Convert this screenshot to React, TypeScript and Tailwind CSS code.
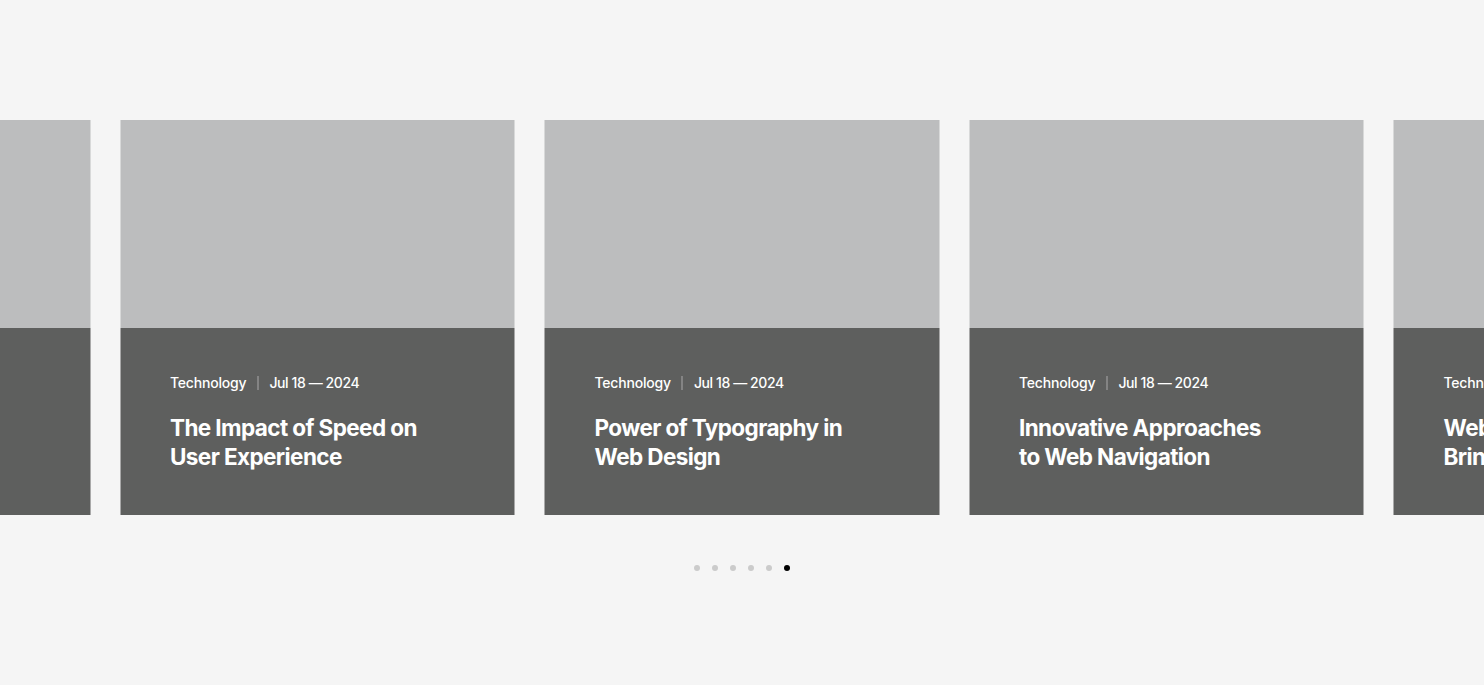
import React from 'react';

interface Post {
  id: number;
  category: string;
  date: string;
  title: string;
}

const posts: Post[] = [
  { id: 1, category: 'Technology', date: 'Jul 18 — 2024', title: 'Designing for Clarity and Focus' },
  { id: 2, category: 'Technology', date: 'Jul 18 — 2024', title: 'The Impact of Speed on User Experience' },
  { id: 3, category: 'Technology', date: 'Jul 18 — 2024', title: 'Power of Typography in Web Design' },
  { id: 4, category: 'Technology', date: 'Jul 18 — 2024', title: 'Innovative Approaches to Web Navigation' },
  { id: 5, category: 'Technology', date: 'Jul 18 — 2024', title: 'Web Accessibility: Bringing Inclusion' },
];

const activeDot = 5;

function PostCard({ post }: { post: Post }) {
  return (
    <article className="w-[394.5px] shrink-0 flex flex-col">
      <div className="h-[208px] bg-[#bcbdbe]" />
      <div className="h-[187px] bg-[#5e5f5e] px-[50px] pt-[45px]">
        <div className="flex items-center text-[14px] leading-[20px] font-medium text-white tracking-[-0.2px]">
          <span>{post.category}</span>
          <span className="mx-[11px] h-[14px] w-px bg-[#a9aaa9]" />
          <span className="tracking-[-0.4px]">{post.date}</span>
        </div>
        <h3 className="mt-[20px] max-w-[255px] text-[22.5px] leading-[29px] font-bold text-white tracking-[-0.6px]">
          {post.title}
        </h3>
      </div>
    </article>
  );
}

export default function App() {
  return (
    <div
      className="min-h-[685px] w-full bg-[#f5f5f5] overflow-hidden pt-[120px]"
      style={{ fontFamily: 'Inter, "Noto Sans", sans-serif' }}
    >
      <div className="overflow-hidden">
        <div className="flex gap-[30px] -translate-x-[304.5px]">
          {posts.map((p) => (
            <PostCard key={p.id} post={p} />
          ))}
        </div>
      </div>

      <div className="mt-[50px] flex items-center justify-center gap-[12px]">
        {[0, 1, 2, 3, 4, 5].map((i) => (
          <button
            key={i}
            aria-label={`Go to slide ${i + 1}`}
            className={`h-[6px] w-[6px] rounded-full ${i === activeDot ? 'bg-black' : 'bg-[#cbcbcb]'}`}
          />
        ))}
      </div>
    </div>
  );
}
